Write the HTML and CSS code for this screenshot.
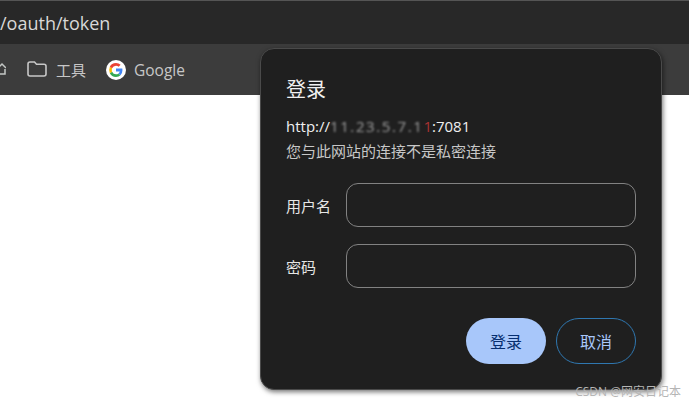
FILE: index.html
```html
<!DOCTYPE html>
<html lang="zh">
  <head>
    <meta charset="utf-8">
    <title>oauth token</title>
    <link rel="stylesheet" href="styles.css">
  </head>

  <body>
    <header class="address-bar">
      <span class="address-text">/oauth/token</span>
    </header>

    <nav class="bookmarks">
      <svg class="cut-icon" width="6" height="16" viewBox="0 0 6 16">
        <path d="M-3 8 L2 3 L6 7 M-2 8 V13 H5 V8" fill="none" stroke="#c4c7c5" stroke-width="1.5"/>
      </svg>
      <a class="bookmark">
        <svg width="20" height="16" viewBox="0 0 20 16">
          <path d="M1 3 Q1 1 3 1 H7.5 L9.5 3.2 H17 Q19 3.2 19 5 V13 Q19 15 17 15 H3 Q1 15 1 13 Z" fill="none" stroke="#c7c7c7" stroke-width="1.6"/>
        </svg>
        <span>工具</span>
      </a>
      <a class="bookmark">
        <svg class="google" width="20" height="20" viewBox="0 0 20 20">
          <circle cx="10" cy="10" r="10" fill="#fff"/>
          <g transform="translate(10 10) scale(1.4) translate(-10 -10)">
            <path d="M14.6 10.2 Q14.6 9.6 14.5 9 H10 V11 H12.7 Q12.4 12 11.6 12.6 L13.2 13.8 Q14.6 12.5 14.6 10.2 Z" fill="#4285f4"/>
            <path d="M10 15 Q12 15 13.2 13.8 L11.6 12.6 Q11 13.1 10 13.1 Q8 13.1 7.2 11.2 L5.6 12.4 Q6.8 15 10 15 Z" fill="#34a853"/>
            <path d="M7.2 11.2 Q6.8 10 7.2 8.8 L5.6 7.6 Q4.6 10 5.6 12.4 Z" fill="#fbbc05"/>
            <path d="M10 6.9 Q11.1 6.9 11.9 7.7 L13.3 6.3 Q12 5 10 5 Q6.8 5 5.6 7.6 L7.2 8.8 Q8 6.9 10 6.9 Z" fill="#ea4335"/>
          </g>
        </svg>
        <span class="google-label">Google</span>
      </a>
    </nav>

    <div class="dialog">
      <h2>登录</h2>
      <p class="origin">http://<span class="blurred">11.23.5.7.1</span><span class="blur-end">1</span>:7081</p>
      <p class="notice">您与此网站的连接不是私密连接</p>

      <div class="fields">
        <label class="field">
          <span>用户名</span>
          <input type="text">
        </label>
        <label class="field">
          <span>密码</span>
          <input type="password">
        </label>
      </div>

      <div class="actions">
        <button class="btn-primary">登录</button>
        <button class="btn-outline">取消</button>
      </div>
    </div>

    <div class="watermark">CSDN @网安日记本</div>
  </body>
</html>
```

FILE: styles.css
```css
html, body {
  height: 100%;
}

body {
  margin: 0;
  overflow: hidden;
  background: #fff;
  font-family: "Open Sans", "Noto Sans CJK SC", sans-serif;
}

.address-bar {
  height: 43px;
  background: #282828;
  border-top: 1px solid #555;
  display: flex;
  align-items: center;
  overflow: hidden;
}

.address-text {
  font-size: 18px;
  color: #d8d8d8;
}

.bookmarks {
  height: 51px;
  background: #3c3c3c;
  display: flex;
  align-items: center;
  padding-bottom: 1px;
  box-sizing: border-box;
  gap: 20px;
  color: #c7c7c7;
  font-size: 15px;
}

.bookmark {
  display: flex;
  align-items: center;
  gap: 9px;
  margin-left: 1px;
}

.google {
  margin: 2px 0 0 -1px;
}

.google-label {
  margin-top: 2px;
  font-size: 15.5px;
  margin-left: -1px;
}

.dialog {
  position: absolute;
  left: 260px;
  top: 48px;
  width: 402px;
  height: 342px;
  box-sizing: border-box;
  padding: 29px 25px 0;
  background: #1f1f1f;
  border-radius: 14px;
  border: 1px solid #4a4a4a;
  box-shadow: 1px 2px 5px rgba(0, 0, 0, 0.55);
  color: #e6e6e6;

  & h2 {
    margin: 0;
    font-size: 20px;
    font-weight: 400;
    line-height: 24px;
    color: #f0f0f0;
  }
}

.origin {
  margin: 14px 0 0;
  font-size: 15px;
  line-height: 20px;
  color: #f0f0f0;
}

.blurred {
  filter: blur(1.2px);
  opacity: 0.6;
  letter-spacing: 1.6px;
}

.blur-end {
  color: #a33;
}

.notice {
  margin: 5px 0 0;
  font-size: 15px;
  line-height: 20px;
  color: #c7c7c7;
}

.fields {
  margin-top: 22px;
  display: flex;
  flex-direction: column;
  gap: 17px;
}

.field {
  display: flex;
  align-items: center;
  font-size: 15px;
  color: #e6e6e6;

  & span {
    width: 60px;
  }

  & input {
    width: 290px;
    height: 44px;
    box-sizing: border-box;
    background: transparent;
    border: 1px solid #828282;
    border-radius: 12px;
  }
}

.actions {
  margin-top: 30px;
  display: flex;
  justify-content: flex-end;
  gap: 10px;

  & button {
    width: 80px;
    height: 46px;
    border-radius: 23px;
    font-family: inherit;
    font-size: 16px;
  }
}

.btn-primary {
  background: #a8c7fa;
  border: none;
  color: #062e6f;
}

.btn-outline {
  background: transparent;
  border: 1px solid #2f77b0;
  color: #a8c7fa;
}

.watermark {
  position: absolute;
  right: 8px;
  top: 384px;
  font-size: 12px;
  line-height: 15px;
  color: #b5b5b5;
}
```
